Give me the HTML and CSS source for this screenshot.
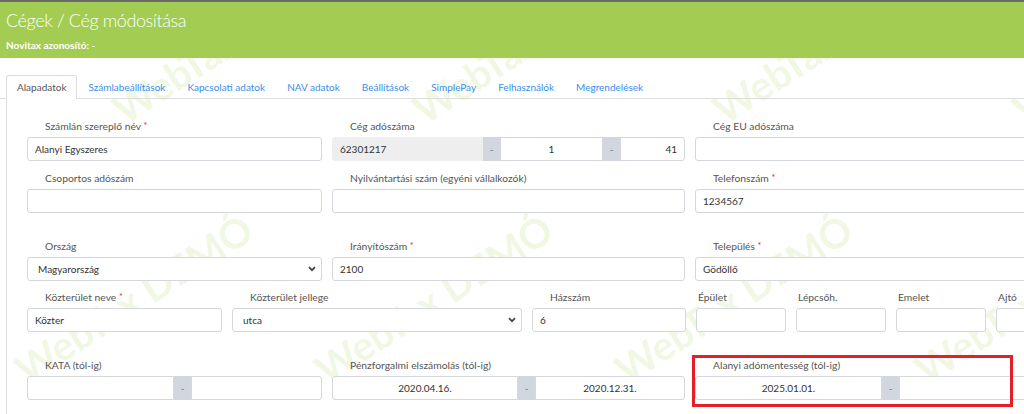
FILE: index.html
```html
<!DOCTYPE html>
<html lang="hu">
<head>
    <meta charset="UTF-8">
    <meta name="viewport" content="width=device-width, initial-scale=1.0">
    <title>Cégek / Cég módosítása</title>
    <link rel="stylesheet" href="styles.css">
</head>
<body>
    <header class="page-header">
        <h1>Cégek / Cég módosítása</h1>
        <div class="page-sub">Novitax azonosító: -</div>
    </header>

    <div class="content">
        <div class="watermark">
            <div class="wm-row wm-top">
                <span>WebTax DEMÓ</span><span>WebTax DEMÓ</span><span>WebTax DEMÓ</span><span>WebTax DEMÓ</span>
            </div>
            <div class="wm-row wm-bottom">
                <span>WebTax DEMÓ</span><span>WebTax DEMÓ</span><span>WebTax DEMÓ</span><span>WebTax DEMÓ</span>
            </div>
        </div>

        <ul class="tabs">
            <li class="active"><a href="#">Alapadatok</a></li>
            <li><a href="#">Számlabeállítások</a></li>
            <li><a href="#">Kapcsolati adatok</a></li>
            <li><a href="#">NAV adatok</a></li>
            <li><a href="#">Beállítások</a></li>
            <li><a href="#">SimplePay</a></li>
            <li><a href="#">Felhasználók</a></li>
            <li><a href="#">Megrendelések</a></li>
        </ul>

        <div class="tab-pane">
            <!-- alap adatok -->
            <div class="form-row cols-3">
                <div class="field">
                    <label>Számlán szereplő név <span class="req">*</span></label>
                    <input class="form-control" type="text" value="Alanyi Egyszeres">
                </div>
                <div class="field">
                    <label>Cég adószáma</label>
                    <div class="input-group">
                        <input class="form-control readonly w-151" type="text" value="62301217" readonly>
                        <span class="addon">-</span>
                        <input class="form-control center w-103" type="text" value="1">
                        <span class="addon">-</span>
                        <input class="form-control right" type="text" value="41">
                    </div>
                </div>
                <div class="field">
                    <label>Cég EU adószáma</label>
                    <input class="form-control" type="text" value="">
                </div>
            </div>

            <div class="form-row cols-3">
                <div class="field">
                    <label>Csoportos adószám</label>
                    <input class="form-control" type="text" value="">
                </div>
                <div class="field">
                    <label>Nyilvántartási szám (egyéni vállalkozók)</label>
                    <input class="form-control" type="text" value="">
                </div>
                <div class="field">
                    <label>Telefonszám <span class="req">*</span></label>
                    <input class="form-control" type="text" value="1234567">
                </div>
            </div>

            <!-- cim -->
            <div class="form-row cols-3 section">
                <div class="field">
                    <label>Ország</label>
                    <div class="select-wrap">
                        <select class="form-control">
                            <option>Magyarország</option>
                        </select>
                        <svg class="chevron" width="8" height="6" viewBox="0 0 8 6"><path d="M1 1.2 4 4.2 7 1.2" fill="none" stroke="#444" stroke-width="1.8"/></svg>
                    </div>
                </div>
                <div class="field">
                    <label>Irányítószám <span class="req">*</span></label>
                    <input class="form-control" type="text" value="2100">
                </div>
                <div class="field">
                    <label>Település <span class="req">*</span></label>
                    <input class="form-control" type="text" value="Gödöllő">
                </div>
            </div>

            <div class="form-row address">
                <div class="field">
                    <label>Közterület neve <span class="req">*</span></label>
                    <input class="form-control" type="text" value="Közter">
                </div>
                <div class="field">
                    <label>Közterület jellege</label>
                    <div class="select-wrap">
                        <select class="form-control">
                            <option>utca</option>
                        </select>
                        <svg class="chevron" width="8" height="6" viewBox="0 0 8 6"><path d="M1 1.2 4 4.2 7 1.2" fill="none" stroke="#444" stroke-width="1.8"/></svg>
                    </div>
                </div>
                <div class="field">
                    <label>Házszám</label>
                    <input class="form-control" type="text" value="6">
                </div>
                <div class="field small">
                    <label>Épület</label>
                    <input class="form-control" type="text" value="">
                </div>
                <div class="field small">
                    <label>Lépcsőh.</label>
                    <input class="form-control" type="text" value="">
                </div>
                <div class="field small">
                    <label>Emelet</label>
                    <input class="form-control" type="text" value="">
                </div>
                <div class="field small">
                    <label>Ajtó</label>
                    <input class="form-control" type="text" value="">
                </div>
            </div>

            <!-- idoszakok -->
            <div class="form-row cols-3 section">
                <div class="field">
                    <label>KATA (tól-ig)</label>
                    <div class="input-group">
                        <input class="form-control center w-147" type="text" value="">
                        <span class="addon">-</span>
                        <input class="form-control center" type="text" value="">
                    </div>
                </div>
                <div class="field">
                    <label>Pénzforgalmi elszámolás (tól-ig)</label>
                    <div class="input-group">
                        <input class="form-control center w-186" type="text" value="2020.04.16.">
                        <span class="addon">-</span>
                        <input class="form-control center" type="text" value="2020.12.31.">
                    </div>
                </div>
                <div class="field">
                    <label>Alanyi adómentesség (tól-ig)</label>
                    <div class="input-group">
                        <input class="form-control center w-187" type="text" value="2025.01.01.">
                        <span class="addon">-</span>
                        <input class="form-control center" type="text" value="">
                    </div>
                    <div class="highlight"></div>
                </div>
            </div>
        </div>
    </div>
</body>
</html>
```

FILE: styles.css
```css
* {
    box-sizing: border-box;
}

html, body {
    margin: 0;
    padding: 0;
}

body {
    width: 1024px;
    height: 414px;
    overflow: hidden;
    background: #ffffff;
    color: #333333;
    font-family: Lato, "Open Sans", sans-serif;
}

.page-header {
    height: 58px;
    background: #a2cc52;
    border-top: 2px solid #6a6a6a;
    color: #ffffff;
    padding: 5px 6px 0;
}

.page-header h1 {
    margin: 0;
    font-size: 18px;
    font-weight: 300;
    letter-spacing: -0.4px;
    line-height: 26px;
}

.page-sub {
    margin-top: 5px;
    font-size: 10px;
    font-weight: 700;
    line-height: 14px;
}

.content {
    position: relative;
    z-index: 0;
    height: 356px;
    overflow: hidden;
}

/* demo watermark behind the form */
.watermark {
    position: absolute;
    top: 0;
    left: 0;
    right: 0;
    bottom: 0;
    overflow: hidden;
    z-index: -1;
    pointer-events: none;
}

.wm-row {
    position: absolute;
    display: flex;
}

.wm-row span {
    flex: none;
    width: 300px;
    font-size: 40px;
    font-weight: 700;
    line-height: 40px;
    white-space: nowrap;
    color: rgba(162, 204, 82, 0.16);
    transform: rotate(-33deg);
    transform-origin: 0 100%;
}

.wm-top {
    left: 128px;
    top: 32px;
}

.wm-bottom {
    left: 30px;
    top: 292px;
}

.tabs {
    list-style: none;
    margin: 17px 0 0;
    padding: 0 0 0 6px;
    display: flex;
    border-bottom: 1px solid #dddddd;
}

.tabs li {
    margin-bottom: -1px;
    border: 1px solid transparent;
    border-radius: 3px 3px 0 0;
}

.tabs li a {
    display: block;
    padding: 0 10px;
    line-height: 22px;
    font-size: 10px;
    color: #3c8ee6;
    text-decoration: none;
}

.tabs li.active {
    background: #ffffff;
    border-color: #dddddd;
    border-bottom-color: #ffffff;
}

.tabs li.active a {
    color: #555555;
}

.tab-pane {
    margin-left: 6px;
    border-left: 1px solid #dddddd;
    padding: 19px 0 40px 20px;
}

.form-row {
    display: grid;
    column-gap: 10px;
    margin-top: 9px;
}

.form-row:first-child {
    margin-top: 0;
}

.form-row.section {
    margin-top: 25px;
}

.form-row.address {
    margin-top: 8px;
}

.cols-3 {
    grid-template-columns: 295px 353px 353px;
}

.address {
    grid-template-columns: 195px 290px 154px 90px 90px 90px 90px;
}

.field {
    position: relative;
}

.field label {
    display: block;
    padding-left: 18px;
    margin-bottom: 3px;
    font-size: 10.3px;
    line-height: 16px;
    color: #555555;
    white-space: nowrap;
}

.field.small label {
    padding-left: 2px;
}

.req {
    color: #e02b2b;
    font-size: 9px;
    vertical-align: top;
}

.form-control {
    display: block;
    width: 100%;
    height: 24px;
    margin: 0;
    padding: 0 7px;
    border: 1px solid #d4d7dc;
    border-radius: 3px;
    background: #ffffff;
    color: #333333;
    font-family: inherit;
    font-size: 10px;
    outline: none;
}

.form-control.readonly {
    background: #eeeeee;
    border-color: #eeeeee;
}

.form-control.center {
    text-align: center;
}

.form-control.right {
    text-align: right;
}

select.form-control {
    appearance: none;
    -webkit-appearance: none;
    padding-left: 10px;
}

.select-wrap {
    position: relative;
}

.chevron {
    position: absolute;
    right: 6px;
    top: 9px;
}

.input-group {
    display: flex;
}

.input-group .form-control {
    flex: 1 1 0;
    min-width: 0;
    border-radius: 0;
}

.input-group .form-control:first-child {
    border-radius: 3px 0 0 3px;
}

.input-group .form-control:last-child {
    border-radius: 0 3px 3px 0;
}

.w-103 { flex: 0 0 103px !important; }
.w-147 { flex: 0 0 147px !important; }
.w-151 { flex: 0 0 151px !important; }
.w-186 { flex: 0 0 186px !important; }
.w-187 { flex: 0 0 187px !important; }

.addon {
    flex: 0 0 17px;
    height: 24px;
    background: #d2d6de;
    color: #777777;
    font-size: 10px;
    line-height: 24px;
    text-align: center;
}

/* red annotation frame */
.highlight {
    position: absolute;
    left: -3px;
    top: -2px;
    width: 321px;
    height: 52px;
    border: 3px solid #e3202a;
}
```
